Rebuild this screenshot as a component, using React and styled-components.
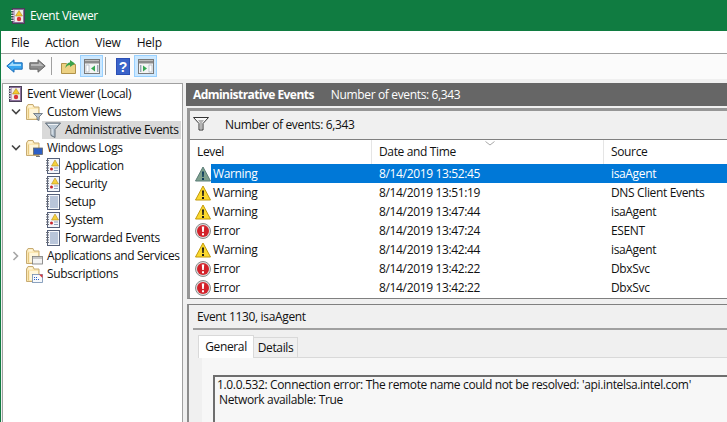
import React from 'react';
import styled, { createGlobalStyle } from 'styled-components';

const GlobalStyle = createGlobalStyle`
  html, body {
    margin: 0;
    padding: 0;
    width: 727px;
    height: 422px;
    overflow: hidden;
    background: #f0f0f0;
    font-family: "Open Sans", "Noto Sans", sans-serif;
    font-size: 12px;
    color: #111;
  }
  svg {
    flex-shrink: 0;
  }
`;

const Window = styled.div`
  width: 727px;
  height: 422px;
  display: flex;
  flex-direction: column;
  overflow: hidden;
  border-left: 1px solid #107c41;
  box-sizing: border-box;
`;

const TitleBar = styled.div`
  flex: 0 0 31px;
  background: #107c41;
  color: #fff;
  display: flex;
  align-items: center;
  gap: 4px;
  padding-left: 9px;
  letter-spacing: -0.35px;
`;

const MenuBar = styled.div`
  flex: 0 0 22px;
  background: #fff;
  border-bottom: 1px solid #a0a0a0;
  display: flex;
  align-items: center;
  gap: 16px;
  padding-left: 10px;
  letter-spacing: -0.2px;
`;

const ToolBar = styled.div`
  flex: 0 0 25px;
  box-sizing: border-box;
  background: #fbfbfb;
  display: flex;
  align-items: flex-start;
  padding: 1px 0 0 2px;
`;

const ToolButton = styled.div`
  width: 23px;
  height: 22px;
  display: flex;
  align-items: center;
  justify-content: center;
  box-sizing: border-box;
  background: ${({ active }) => (active ? '#cce8ff' : 'transparent')};
  border: 1px solid ${({ active }) => (active ? '#99d1ff' : 'transparent')};
`;

const ToolSep = styled.div`
  width: 1px;
  height: 18px;
  background: #a0a0a0;
  margin: 2px 5px 0 2px;
`;

const Body = styled.div`
  flex: 1;
  min-height: 0;
  display: flex;
  padding: 4px 0 0 1px;
  background: #f0f0f0;
`;

const TreePane = styled.div`
  flex: 0 0 181px;
  box-sizing: border-box;
  background: #fff;
  border: 1px solid #a0a0a0;
  border-bottom: none;
  padding: 1px 0 0 4px;
  overflow: hidden;
`;

const TreeRow = styled.div`
  height: 18px;
  display: flex;
  align-items: center;
  padding-left: ${({ level }) => level * 19}px;
  white-space: nowrap;
  letter-spacing: -0.35px;
`;

const Caret = styled.div`
  flex: 0 0 18px;
  display: flex;
  justify-content: center;
`;

const RowLabel = styled.span`
  margin-left: 4px;
  line-height: 18px;
`;

const SelectedWrap = styled.div`
  flex: 1;
  display: flex;
  align-items: center;
  background: #d9d9d9;
  height: 18px;
  margin: 0 1px 0 -3px;
  padding-left: 3px;
`;

const MainPane = styled.div`
  flex: 1;
  min-width: 0;
  margin-left: 3px;
  display: flex;
  flex-direction: column;
`;

const PaneHeader = styled.div`
  flex: 0 0 23px;
  background: #666;
  color: #fff;
  display: flex;
  align-items: center;
  padding-left: 7px;
  gap: 17px;
  letter-spacing: -0.35px;
`;

const HeaderTitle = styled.b`
  font-weight: 700;
  letter-spacing: -0.55px;
`;

const ListFrame = styled.div`
  margin: 2px 0 0 1px;
  flex: 0 0 191px;
  box-sizing: border-box;
  border-top: 3px solid #969696;
  border-left: 3px solid #969696;
  border-bottom: 1px solid #808080;
  background: #fff;
  display: flex;
  flex-direction: column;
`;

const FilterBar = styled.div`
  flex: 0 0 29px;
  box-sizing: border-box;
  background: #f0f0f0;
  border-bottom: 1px solid #808080;
  display: flex;
  align-items: center;
  padding: 0 0 2px 3px;
  gap: 16px;
  letter-spacing: -0.35px;
`;

const GridRow = styled.div`
  display: grid;
  grid-template-columns: 182px 232px 1fr;
  height: 19px;
  align-items: center;
  white-space: nowrap;
  letter-spacing: -0.35px;
`;

const HeadRow = styled(GridRow)`
  height: 24px;
  position: relative;
`;

const HeadCell = styled.div`
  height: 24px;
  line-height: 24px;
  padding-left: 7px;
  box-sizing: border-box;
  border-right: ${({ last }) => (last ? 'none' : '1px solid #e5e5e5')};
`;

const SortMark = styled.svg`
  position: absolute;
  left: 295px;
  top: 1px;
`;

const LevelCell = styled.div`
  display: flex;
  align-items: center;
  height: 19px;
  padding-left: 5px;
`;

const LevelText = styled.span`
  flex: 1;
  line-height: 19px;
  padding-left: 2px;
  background: ${({ selected }) => (selected ? '#0078d7' : 'transparent')};
  color: ${({ selected }) => (selected ? '#fff' : 'inherit')};
`;

const Cell = styled.div`
  height: 19px;
  line-height: 19px;
  padding-left: 7px;
  background: ${({ selected }) => (selected ? '#0078d7' : 'transparent')};
  color: ${({ selected }) => (selected ? '#fff' : 'inherit')};
`;

const DetailPane = styled.div`
  flex: 1;
  min-height: 0;
  margin: 5px 0 0 1px;
  border-top: 1px solid #808080;
  border-left: 2px solid #8c8c8c;
  padding-left: 4px;
  letter-spacing: -0.35px;
`;

const DetailTitle = styled.div`
  height: 23px;
  line-height: 23px;
  padding-left: 4px;
  border-bottom: 2px solid #a0a0a0;
`;

const TabStrip = styled.div`
  display: flex;
  align-items: flex-end;
  margin: 5px 0 0 5px;
  height: 22px;
  border-bottom: 1px solid #d9d9d9;
`;

const Tab = styled.div`
  box-sizing: border-box;
  height: ${({ active }) => (active ? 23 : 20)}px;
  line-height: ${({ active }) => (active ? 21 : 20)}px;
  width: ${({ active }) => (active ? 56 : 44)}px;
  text-align: center;
  background: ${({ active }) => (active ? '#fff' : '#f0f0f0')};
  border: 1px solid #d9d9d9;
  border-bottom: none;
  border-left-width: ${({ active }) => (active ? 1 : 0)}px;
  margin-bottom: ${({ active }) => (active ? -1 : 0)}px;
  position: relative;
`;

const TabBody = styled.div`
  margin-left: 9px;
  padding: 17px 0 0 11px;
  background: #f7f7f7;
`;

const MessageBox = styled.div`
  border-top: 2px solid #6e6e6e;
  border-left: 2px solid #6e6e6e;
  background: #f7f7f7;
  height: 60px;
  padding-left: 2px;
  line-height: 15px;
  white-space: nowrap;
`;

const MessageLine = styled.div`
  padding-left: ${({ indent }) => (indent ? 2 : 0)}px;
`;

const NotebookIcon = ({ badge }) => (
  <svg width="16" height="16" viewBox="0 0 16 16">
    <rect x="2.5" y=".5" width="12" height="15" fill="#f4f6fa" stroke="#55607a" />
    <path d="M1 2.5h3M1 5h3M1 7.5h3M1 10h3M1 12.5h3" stroke="#6a6f7a" />
    {badge ? (
      <>
        <path d="M10 2 13.5 8h-7z" fill="#f6d13c" stroke="#b48f1c" strokeWidth=".6" />
        <circle cx="6.5" cy="11" r="1.5" fill="#c9252d" />
        <path d="M9 10h4M9 12.5h4" stroke="#8d9fbc" />
      </>
    ) : (
      <path d="M5 3h8M5 5h8M5 7h8M5 9h8M5 11h8M5 13h8" stroke="#7f95ba" />
    )}
  </svg>
);

const AppIcon = () => (
  <svg width="16" height="16" viewBox="0 0 16 16">
    <rect x="2.5" y=".5" width="12" height="15" fill="#8b6f9c" stroke="#4a4058" />
    <path d="M1 2.5h3M1 5h3M1 7.5h3M1 10h3M1 12.5h3" stroke="#ddd" />
    <rect x="4.5" y="2" width="8.5" height="12" fill="#f1eee8" />
    <path d="M9 2.5 12.5 8h-7z" fill="#f4c92e" stroke="#9c7a10" strokeWidth=".5" />
    <circle cx="9" cy="11" r="2.2" fill="#d8343a" />
  </svg>
);

const FolderIcon = ({ children }) => (
  <svg width="18" height="18" viewBox="0 0 18 18">
    <path d="M1.5 4V16.5H14V4H9L8 1.5H3z" fill="#fbe7b2" stroke="#c7ab72" />
    <path d="M3.5 2.5h4v2h-4zM4.5 6h8.5v9H4.5z" fill="#fff6da" />
    <path d="M3.5 5.5v10" stroke="#e5c77f" />
    {children}
  </svg>
);

const FunnelIcon = () => (
  <svg width="16" height="16" viewBox="0 0 16 16">
    <path d="M.5 1h15l-5.5 6.5v8L6 13.5v-6z" fill="#b9c6d2" stroke="#5f6b76" />
    <path d="M3 2.5h10M7 7v5.5" stroke="#eef2f5" />
  </svg>
);

const FilterFunnel = () => (
  <svg width="16" height="14" viewBox="0 0 16 14">
    <path d="M.5.5h15l-5.5 6V13H6V6.5z" fill="#f8f8f8" stroke="#333" />
    <path d="M5 3h6L9 6v6H7V6z" fill="#b4b4b4" />
  </svg>
);

const WarningIcon = ({ selected }) => (
  <svg width="16" height="16" viewBox="0 0 16 16">
    <path
      d="M8 1 15.5 15H.5z"
      fill={selected ? '#7e9f8d' : '#fbd92f'}
      stroke={selected ? '#5a7d77' : '#c29a0d'}
      strokeLinejoin="round"
    />
    <path d="M7 5.5h2l-.3 5.5H7.3zM7 12h2v2H7z" fill={selected ? '#0d3c5c' : '#1a1a1a'} />
  </svg>
);

const ErrorIcon = () => (
  <svg width="16" height="16" viewBox="0 0 16 16">
    <circle cx="8" cy="8" r="7.5" fill="#dcdcdc" stroke="#8c8c8c" />
    <circle cx="8" cy="8" r="6" fill="#d3222a" />
    <path d="M6.8 3.5h2.4l-.4 5.5H7.2zM7 10.2h2v2H7z" fill="#fff" />
  </svg>
);

// left: panel at the left and arrow pointing left, otherwise mirrored
const WindowIcon = ({ left }) => (
  <svg width="16" height="15" viewBox="0 0 16 15">
    <rect x=".5" y=".5" width="15" height="14" fill="#f4f4f4" stroke="#7a7a7a" />
    <path d="M1 3h14" stroke="#8c8c8c" strokeWidth="3" />
    <rect x={left ? 2 : 11} y="6" width="3" height="7" fill="#fff" stroke="#9aa7b5" strokeWidth=".6" />
    <rect x={left ? 13 : 2} y="6" width="1.4" height="7" fill="#9aa7b5" />
    <path d={left ? 'M11 6.5v6l-4-3z' : 'M5 6.5v6l4-3z'} fill="#36a853" />
  </svg>
);

const ExpandedCaret = () => (
  <svg width="10" height="8" viewBox="0 0 10 8">
    <path d="M1 1.5 5 5.5 9 1.5" fill="none" stroke="#444" strokeWidth="1.6" />
  </svg>
);

const CollapsedCaret = () => (
  <svg width="8" height="10" viewBox="0 0 8 10">
    <path d="M1.5 1 5.5 5 1.5 9" fill="none" stroke="#a6a6a6" strokeWidth="1.6" />
  </svg>
);

const events = [
  { level: 'Warning', time: '8/14/2019 13:52:45', source: 'isaAgent', selected: true },
  { level: 'Warning', time: '8/14/2019 13:51:19', source: 'DNS Client Events' },
  { level: 'Warning', time: '8/14/2019 13:47:44', source: 'isaAgent' },
  { level: 'Error', time: '8/14/2019 13:47:24', source: 'ESENT' },
  { level: 'Warning', time: '8/14/2019 13:42:44', source: 'isaAgent' },
  { level: 'Error', time: '8/14/2019 13:42:22', source: 'DbxSvc' },
  { level: 'Error', time: '8/14/2019 13:42:22', source: 'DbxSvc' },
];

const App = () => (
  <>
    <GlobalStyle />
    <Window>
      <TitleBar>
        <AppIcon />
        Event Viewer
      </TitleBar>
      <MenuBar>
        <span>File</span>
        <span>Action</span>
        <span>View</span>
        <span>Help</span>
      </MenuBar>
      <ToolBar>
        <ToolButton>
          <svg width="17" height="14" viewBox="0 0 17 14">
            <path d="M.8 7 8 .8v3h8.2v6.4H8v3z" fill="#38a6f0" stroke="#1b6cb8" />
            <path d="M7 3 2.5 7H15V5H7z" fill="#a5dcfb" />
          </svg>
        </ToolButton>
        <ToolButton>
          <svg width="17" height="14" viewBox="0 0 17 14">
            <path d="M16.2 7 9 .8v3H.8v6.4H9v3z" fill="#8c8c8c" stroke="#666" />
            <path d="M10 3l4.5 4H2V5h8z" fill="#b8b8b8" />
          </svg>
        </ToolButton>
        <ToolSep />
        <ToolButton>
          <svg width="15" height="16" viewBox="0 0 15 16">
            <path d="M.5 5.5h5l1 1h8v9H.5z" fill="#ecd183" stroke="#b0924a" />
            <path d="M4.5 10c0-3 2-5.5 4.5-5.5V2L14 5.5 9 9V7C7 7 5.5 8 4.5 10z" fill="#3aa24a" />
          </svg>
        </ToolButton>
        <ToolButton active>
          <WindowIcon left />
        </ToolButton>
        <ToolSep />
        <ToolButton>
          <svg width="14" height="17" viewBox="0 0 14 17">
            <rect width="14" height="17" fill="#2b4fb5" />
            <rect x="1" y="1" width="12" height="15" fill="#3a63c9" />
            <text x="7" y="13.5" fontSize="14" fontWeight="700" fill="#fff" textAnchor="middle" fontFamily="Liberation Sans">?</text>
          </svg>
        </ToolButton>
        <ToolButton active>
          <WindowIcon />
        </ToolButton>
      </ToolBar>
      <Body>
        <TreePane>
          <TreeRow level={0}>
            <AppIcon />
            <RowLabel>Event Viewer (Local)</RowLabel>
          </TreeRow>
          <TreeRow level={0}>
            <Caret><ExpandedCaret /></Caret>
            <FolderIcon>
              <path d="M8.5 10.5h9L14 14v3.5l-2-1V14z" fill="#b6c3cf" stroke="#5f6b76" strokeWidth=".8" />
            </FolderIcon>
            <RowLabel>Custom Views</RowLabel>
          </TreeRow>
          <TreeRow level={2}>
            <SelectedWrap>
              <FunnelIcon />
              <RowLabel>Administrative Events</RowLabel>
            </SelectedWrap>
          </TreeRow>
          <TreeRow level={0}>
            <Caret><ExpandedCaret /></Caret>
            <FolderIcon>
              <rect x="8.5" y="9" width="9" height="6.5" fill="#2d5fc4" stroke="#666" strokeWidth=".8" />
              <path d="M11 17.5h4" stroke="#777" strokeWidth="1.4" />
            </FolderIcon>
            <RowLabel>Windows Logs</RowLabel>
          </TreeRow>
          <TreeRow level={2}><NotebookIcon badge /><RowLabel>Application</RowLabel></TreeRow>
          <TreeRow level={2}><NotebookIcon badge /><RowLabel>Security</RowLabel></TreeRow>
          <TreeRow level={2}><NotebookIcon /><RowLabel>Setup</RowLabel></TreeRow>
          <TreeRow level={2}><NotebookIcon badge /><RowLabel>System</RowLabel></TreeRow>
          <TreeRow level={2}><NotebookIcon /><RowLabel>Forwarded Events</RowLabel></TreeRow>
          <TreeRow level={0}>
            <Caret><CollapsedCaret /></Caret>
            <FolderIcon>
              <rect x="7.5" y="9.5" width="10" height="7.5" fill="#f4f4f4" stroke="#777" strokeWidth=".8" />
              <path d="M7.5 11h10" stroke="#999" />
            </FolderIcon>
            <RowLabel>Applications and Services</RowLabel>
          </TreeRow>
          <TreeRow level={0}>
            <Caret />
            <FolderIcon>
              <rect x="7.5" y="9.5" width="10" height="8" fill="#f7f9fc" stroke="#6f8cb0" strokeWidth=".8" />
              <path d="M14 9.5h3.5V13z" fill="#d8343a" />
              <path d="M9 12.5h1M11 12.5h1M9 14.5h1M11 14.5h1M13 14.5h1" stroke="#2d5fc4" />
            </FolderIcon>
            <RowLabel>Subscriptions</RowLabel>
          </TreeRow>
        </TreePane>
        <MainPane>
          <PaneHeader>
            <HeaderTitle>Administrative Events</HeaderTitle>
            <span>Number of events: 6,343</span>
          </PaneHeader>
          <ListFrame>
            <FilterBar>
              <FilterFunnel />
              <span>Number of events: 6,343</span>
            </FilterBar>
            <HeadRow>
              <HeadCell>Level</HeadCell>
              <HeadCell>Date and Time</HeadCell>
              <HeadCell last>Source</HeadCell>
              <SortMark width="10" height="5" viewBox="0 0 10 5">
                <path d="M.5.5 5 4 9.5.5" fill="none" stroke="#a8a8a8" />
              </SortMark>
            </HeadRow>
            {events.map((event, i) => (
              <GridRow key={i}>
                <LevelCell>
                  {event.level === 'Warning' ? <WarningIcon selected={event.selected} /> : <ErrorIcon />}
                  <LevelText selected={event.selected}>{event.level}</LevelText>
                </LevelCell>
                <Cell selected={event.selected}>{event.time}</Cell>
                <Cell selected={event.selected}>{event.source}</Cell>
              </GridRow>
            ))}
          </ListFrame>
          <DetailPane>
            <DetailTitle>Event 1130, isaAgent</DetailTitle>
            <TabStrip>
              <Tab active>General</Tab>
              <Tab>Details</Tab>
            </TabStrip>
            <TabBody>
              <MessageBox>
                <MessageLine>1.0.0.532: Connection error: The remote name could not be resolved: 'api.intelsa.intel.com'</MessageLine>
                <MessageLine indent>Network available: True</MessageLine>
              </MessageBox>
            </TabBody>
          </DetailPane>
        </MainPane>
      </Body>
    </Window>
  </>
);

export default App;
